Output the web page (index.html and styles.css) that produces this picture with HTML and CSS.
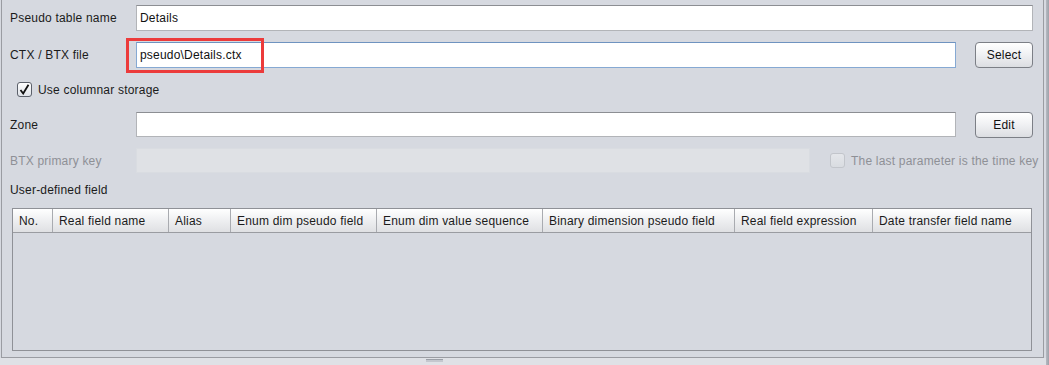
FILE: index.html
```html
<!DOCTYPE html>
<html lang="en">
<head>
    <meta charset="UTF-8">
    <title>Pseudo table</title>
    <link rel="stylesheet" href="styles.css">
</head>
<body>
    <div class="window">
        <div class="main">
            <div class="panel">
                <div class="row row-name">
                    <label class="lbl">Pseudo table name</label>
                    <input class="txt" type="text" value="Details">
                </div>

                <div class="row row-file">
                    <label class="lbl">CTX / BTX file</label>
                    <div class="file-wrap">
                        <input class="txt txt-focus" type="text" value="pseudo\Details.ctx">
                        <span class="highlight"></span>
                    </div>
                    <button class="btn">Select</button>
                </div>

                <div class="row row-check">
                    <span class="chk chk-on">
                        <svg width="11" height="11" viewBox="0 0 11 11"><path d="M1.5 6 L4.2 9.5 L9.5 0.8" fill="none" stroke="#111" stroke-width="1.8"/></svg>
                    </span>
                    <span class="chk-text">Use columnar storage</span>
                </div>

                <div class="row row-zone">
                    <label class="lbl">Zone</label>
                    <input class="txt" type="text" value="">
                    <button class="btn">Edit</button>
                </div>

                <div class="row row-key">
                    <label class="lbl lbl-off">BTX primary key</label>
                    <input class="txt txt-off" type="text" value="" disabled>
                    <span class="chk chk-off"></span>
                    <span class="chk-text lbl-off">The last parameter is the time key</span>
                </div>

                <div class="row row-title">User-defined field</div>

                <div class="grid">
                    <div class="grid-head">
                        <div class="col c1">No.</div>
                        <div class="col c2">Real field name</div>
                        <div class="col c3">Alias</div>
                        <div class="col c4">Enum dim pseudo field</div>
                        <div class="col c5">Enum dim value sequence</div>
                        <div class="col c6">Binary dimension pseudo field</div>
                        <div class="col c7">Real field expression</div>
                        <div class="col c8">Date transfer field name</div>
                    </div>
                    <div class="grid-body"></div>
                </div>
            </div>
            <div class="splitter"><span class="grip"></span></div>
        </div>
        <div class="edge"></div>
    </div>
</body>
</html>
```

FILE: styles.css
```css
* {
    box-sizing: border-box;
}

body {
    margin: 0;
    background-color: #d6d9e0;
    font-family: "Liberation Sans", Arial, sans-serif;
    font-size: 12px;
    letter-spacing: 0.2px;
    color: #1b1b1b;
    overflow: hidden;
}

.window {
    display: flex;
    width: 1049px;
    height: 365px;
}

.main {
    width: 1046px;
    display: flex;
    flex-direction: column;
}

.panel {
    margin-left: 1px;
    width: 1043px;
    border-left: 1px solid #9a9ca2;
    border-right: 1px solid #9a9ca2;
    border-bottom: 1px solid #9a9ca2;
    padding: 0 10px 6px 8px;
    display: flex;
    flex-direction: column;
}

.edge {
    width: 3px;
    background: linear-gradient(to right, #b5b9c1, #9ea2aa);
}

.row {
    display: flex;
    align-items: center;
    white-space: nowrap;
}

.row > * {
    flex-shrink: 0;
}

.lbl {
    width: 126px;
}

.lbl-off {
    color: #8e9096;
}

.txt {
    height: 26px;
    border: 1px solid #b2b4b8;
    border-top-color: #8c8e93;
    background: #fff;
    padding: 0 3px;
    font-family: inherit;
    font-size: 12px;
    letter-spacing: 0.2px;
    color: #111;
    outline: none;
}

.row-name {
    margin-top: 5px;
    height: 26px;
}

.row-name .txt {
    flex: 1;
}

.row-file {
    margin-top: 11px;
    height: 26px;
}

.file-wrap {
    position: relative;
    width: 820px;
    height: 26px;
}

.file-wrap .txt {
    width: 100%;
}

.txt-focus {
    border-color: #86a9d3;
    border-top-color: #6f93c0;
}

.highlight {
    position: absolute;
    left: -10px;
    top: -4px;
    width: 138px;
    height: 35px;
    border: 3px solid #ec3b3b;
    pointer-events: none;
}

.btn {
    margin-left: 19px;
    width: 58px;
    height: 26px;
    border: 1px solid #7c7f86;
    border-radius: 4px;
    background: linear-gradient(to bottom, #ffffff, #f1f2f4 45%, #dcdee2);
    font-family: inherit;
    font-size: 12px;
    letter-spacing: 0.2px;
    color: #111;
    padding: 0;
}

.row-check {
    margin-top: 14px;
    height: 15px;
    padding-left: 7px;
}

.chk {
    width: 15px;
    height: 15px;
    border: 1px solid #5b606a;
    border-radius: 3px;
    background: linear-gradient(to bottom, #ffffff, #dfe2e8);
    display: flex;
    align-items: center;
    justify-content: center;
}

.chk-text {
    margin-left: 6px;
}

.row-zone {
    margin-top: 15px;
    height: 26px;
}

.row-zone .txt {
    width: 820px;
    height: 25px;
    align-self: flex-start;
}

.row-key {
    margin-top: 10px;
    height: 25px;
}

.txt-off {
    width: 674px;
    height: 25px;
    background: #dfe1e5;
    border: 1px solid #d9dce1;
}

.chk-off {
    margin-left: 20px;
    border-color: #c2c5cb;
    background: linear-gradient(to bottom, #e4e6ea, #d9dce1);
}

.row-title {
    margin-top: 9px;
    height: 16px;
}

.grid {
    margin: 10px 1px 0 2px;
    height: 143px;
    border: 1px solid #8f9197;
    display: flex;
    flex-direction: column;
}

.grid-head {
    display: flex;
    height: 24px;
    border-bottom: 1px solid #9a9ca1;
    background: linear-gradient(to bottom, #ffffff, #eeeff1 50%, #dfe0e3);
}

.col {
    padding-left: 6px;
    border-right: 1px solid #a9abb0;
    display: flex;
    align-items: center;
    white-space: nowrap;
}

.c1 { width: 40px; }
.c2 { width: 116px; }
.c3 { width: 62px; }
.c4 { width: 146px; }
.c5 { width: 166px; }
.c6 { width: 192px; }
.c7 { width: 138px; }
.c8 { flex: 1; border-right: none; }

.grid-body {
    flex: 1;
}

.splitter {
    flex: 1;
    background: #dfe1e6;
    position: relative;
}

.grip {
    position: absolute;
    left: 426px;
    top: 1px;
    width: 17px;
    height: 3px;
    border-top: 1px solid #9b9fa7;
    background: #c4c7ce;
}
```
